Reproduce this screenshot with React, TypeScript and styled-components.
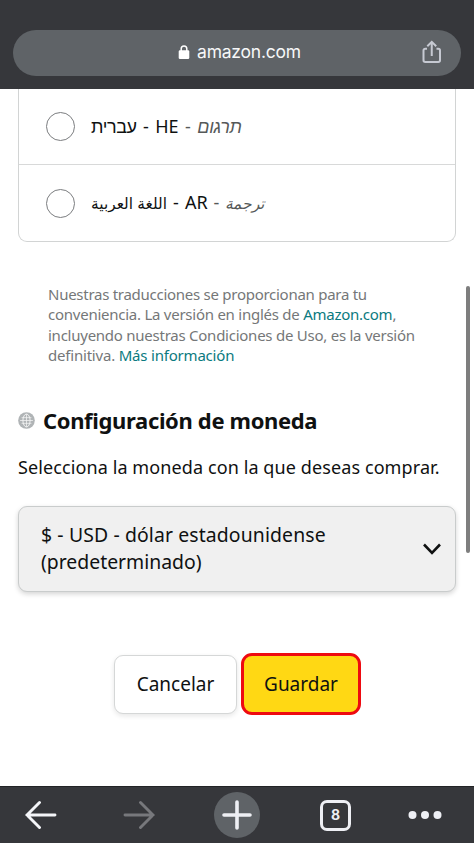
import React from 'react';
import styled, { createGlobalStyle } from 'styled-components';

const GlobalStyle = createGlobalStyle`
  * { box-sizing: border-box; }
  body { margin: 0; background: #fff; }
`;

const Screen = styled.div`
  position: relative;
  display: flex;
  flex-direction: column;
  width: 474px;
  height: 843px;
  overflow: hidden;
  background: #fff;
  color: #0f1111;
  font-family: 'Noto Sans', 'Open Sans', sans-serif;
`;

const TopBar = styled.header`
  flex: none;
  height: 89px;
  padding: 30px 13px 0;
  background: #36373b;
`;

const AddressBar = styled.div`
  display: grid;
  grid-template-columns: 60px 1fr 60px;
  align-items: center;
  height: 46px;
  border-radius: 23px;
  background: #5f6367;
`;

const Address = styled.div`
  grid-column: 2;
  display: flex;
  align-items: center;
  justify-content: center;
  gap: 7px;
  padding: 0 0 2px 5px;
  color: #f6f7f8;
  font: 400 17.5px/24px Inter, sans-serif;
  letter-spacing: -0.22px;
`;

const ShareSlot = styled.div`
  display: flex;
  justify-content: center;
  padding: 0 0 3px 1px;
`;

const Content = styled.main`
  flex: 1;
  padding: 0 18px;
`;

const LanguageCard = styled.section`
  height: 153px;
  border: 1px solid #d2d4d4;
  border-top: 0;
  border-radius: 0 0 9px 9px;
`;

const LanguageRow = styled.label<{ $divided?: boolean }>`
  display: flex;
  align-items: center;
  height: ${(p) => (p.$divided ? 76 : 76)}px;
  padding: 0 0 ${(p) => (p.$divided ? 1 : 0)}px 27px;
  ${(p) => p.$divided && 'border-bottom: 1px solid #d8d9d9;'}
`;

const Radio = styled.span`
  width: 29px;
  height: 29px;
  margin-right: 16px;
  border: 1px solid #7b7d7f;
  border-radius: 50%;
`;

const LanguageLabel = styled.span<{ $gap: number }>`
  display: flex;
  align-items: baseline;
  gap: ${(p) => p.$gap}px;
  font-size: 18px;
  line-height: 26px;
  white-space: nowrap;
`;

const Native = styled.bdi<{ $size: number; $spacing?: number }>`
  font-family: 'Liberation Sans', 'DejaVu Sans', sans-serif;
  font-size: ${(p) => p.$size}px;
  letter-spacing: ${(p) => p.$spacing ?? 0}px;
`;

const Translation = styled(Native)`
  color: #565959;
  font-style: italic;
`;

const Muted = styled.span`
  color: #565959;
`;

const Notice = styled.p`
  margin: 42px 0 0;
  padding-left: 30px;
  color: #757778;
  font-size: 15px;
  line-height: 20.3px;
`;

const Line = styled.span<{ $spacing: number }>`
  display: block;
  white-space: nowrap;
  letter-spacing: ${(p) => p.$spacing}px;
`;

const Link = styled.a`
  color: #0b7a80;
`;

const SectionHeading = styled.h2`
  display: flex;
  align-items: center;
  gap: 8px;
  margin: 39px 0 0;
  font-size: 22px;
  line-height: 32px;
  font-weight: 700;
`;

const Intro = styled.p`
  margin: 18px 0 0;
  font-size: 18px;
  line-height: 26px;
`;

const CurrencySelect = styled.button`
  display: flex;
  align-items: center;
  justify-content: space-between;
  width: 438px;
  height: 86px;
  margin-top: 25.5px;
  padding: 0 14px 0 22px;
  border: 1px solid #c9cccc;
  border-radius: 9px;
  background: #f0f0f0;
  box-shadow: 0 2px 5px rgba(15, 17, 17, 0.18);
  color: #0f1111;
  font: 400 19.4px/26.5px 'Noto Sans', sans-serif;
  text-align: left;
`;

const Actions = styled.div`
  display: flex;
  align-items: center;
  gap: 4px;
  margin: 61.5px 0 0 96px;
`;

const ActionButton = styled.button<{ $primary?: boolean }>`
  width: ${(p) => (p.$primary ? 120 : 123)}px;
  height: ${(p) => (p.$primary ? 62 : 59)}px;
  padding: 0;
  border: ${(p) => (p.$primary ? '3px solid #ee0a10' : '1px solid #d5d7d7')};
  border-radius: ${(p) => (p.$primary ? 11 : 9)}px;
  background: ${(p) => (p.$primary ? '#ffd814' : '#fff')};
  box-shadow: ${(p) => (p.$primary ? 'none' : '0 2px 5px rgba(15, 17, 17, 0.1)')};
  color: #0f1111;
  font: 400 19px/26px 'Noto Sans', sans-serif;
`;

const ScrollThumb = styled.div`
  position: absolute;
  top: 286px;
  right: 4px;
  width: 4px;
  height: 267px;
  border-radius: 2px;
  background: #7e7e7e;
`;

const BottomBar = styled.nav`
  flex: none;
  display: grid;
  grid-template-columns: 82px 114px 82px 115px 64px;
  align-items: center;
  justify-items: center;
  height: 57px;
  border-top: 1px solid #222326;
  background: #36373b;
`;

const NewTab = styled.span`
  display: grid;
  place-items: center;
  width: 46px;
  height: 46px;
  border-radius: 50%;
  background: #5f6367;
`;

const TabCount = styled.span`
  display: grid;
  place-items: center;
  width: 31px;
  height: 31px;
  border: 3px solid #eeeff4;
  border-radius: 7px;
  color: #eeeff4;
  font: 700 14px/14px Inter, sans-serif;
`;

const LockIcon = () => (
  <svg width="12" height="16" viewBox="0 0 12 16" fill="none">
    <rect x="0.7" y="6.2" width="10.6" height="8.8" rx="1.3" fill="#fff" />
    <path d="M3.2 7V4.700a2.8 2.8 0 0 1 5.6 0V7" stroke="#fff" strokeWidth="1.5" />
  </svg>
);

const ShareIcon = () => (
  <svg width="20" height="24" viewBox="0 0 20 24" fill="none" stroke="#c6c9d2" strokeWidth="2">
    <path d="M5 8.7H3.2A1.7 1.7 0 0 0 1.5 10.4V20.3A1.7 1.7 0 0 0 3.2 22H16.3A1.7 1.7 0 0 0 18 20.3V10.4A1.7 1.7 0 0 0 16.3 8.7H14.5" />
    <path d="M9.75 16V2M5.3 6.3L9.75 1.9L14.2 6.3" />
  </svg>
);

const GlobeIcon = () => (
  <svg width="17" height="17" viewBox="0 0 18 18" fill="none">
    <circle cx="9" cy="9" r="8.8" fill="#b0b4b6" />
    <g stroke="#fff" strokeWidth="1" opacity="0.85">
      <ellipse cx="9" cy="9" rx="3.8" ry="6.8" />
      <path d="M9 2.200V15.800M2.200 9H15.800M3.800 6H14.200M3.800 12H14.200" opacity="0.8" />
    </g>
  </svg>
);

const ChevronIcon = () => (
  <svg width="18" height="12" viewBox="0 0 18 12" fill="none" stroke="#0f1111" strokeWidth="2.6">
    <path d="M1 1.5L9 9.8L17 1.5" />
  </svg>
);

const ArrowIcon = ({ forward = false }: { forward?: boolean }) => (
  <svg width="32" height="30" viewBox="0 0 32 30" fill="none" strokeWidth="2.9" strokeLinecap="round" stroke={forward ? '#77787c' : '#f4f5f8'}>
    <path d={forward ? 'M2 15H30M17.5 2.5L30 15L17.5 27.5' : 'M30 15H2M14.5 2.5L2 15L14.5 27.5'} />
  </svg>
);

const PlusIcon = () => (
  <svg width="30" height="30" viewBox="0 0 30 30" stroke="#eeeff4" strokeWidth="3.6" strokeLinecap="round">
    <path d="M15 2V28M2 15H28" />
  </svg>
);

const MoreIcon = () => (
  <svg width="34" height="10" viewBox="0 0 34 10" fill="#eeeff4">
    <circle cx="4.5" cy="5" r="4" />
    <circle cx="17" cy="5" r="4" />
    <circle cx="29.5" cy="5" r="4" />
  </svg>
);

export default function App() {
  return (
    <Screen>
      <GlobalStyle />
      <TopBar>
        <AddressBar>
          <Address>
            <LockIcon />
            amazon.com
          </Address>
          <ShareSlot>
            <ShareIcon />
          </ShareSlot>
        </AddressBar>
      </TopBar>
      <Content>
        <LanguageCard>
          <LanguageRow $divided>
            <Radio />
            <LanguageLabel $gap={6.4}>
              <Native $size={18} $spacing={-0.4}>עברית</Native>
              <span>-</span>
              <span>HE</span>
              <Muted>-</Muted>
              <Translation $size={18} $spacing={-0.2}>תרגום</Translation>
            </LanguageLabel>
          </LanguageRow>
          <LanguageRow>
            <Radio />
            <LanguageLabel $gap={6}>
              <Native $size={15.4}>اللغة العربية</Native>
              <span>-</span>
              <span>AR</span>
              <Muted>-</Muted>
              <Translation $size={15.4}>ترجمة</Translation>
            </LanguageLabel>
          </LanguageRow>
        </LanguageCard>
        <Notice>
          <Line $spacing={-0.27}>Nuestras traducciones se proporcionan para tu</Line>
          <Line $spacing={-0.25}>
            conveniencia. La versión en inglés de <Link>Amazon.com</Link>,
          </Line>
          <Line $spacing={-0.25}>incluyendo nuestras Condiciones de Uso, es la versión</Line>
          <Line $spacing={-0.2}>
            definitiva. <Link>Más información</Link>
          </Line>
        </Notice>
        <SectionHeading>
          <GlobeIcon />
          <Line $spacing={-0.35}>Configuración de moneda</Line>
        </SectionHeading>
        <Intro>
          <Line $spacing={0.1}>Selecciona la moneda con la que deseas comprar.</Line>
        </Intro>
        <CurrencySelect>
          <span>
            <Line $spacing={0.12}>$ - USD - dólar estadounidense</Line>
            <Line $spacing={0}>(predeterminado)</Line>
          </span>
          <ChevronIcon />
        </CurrencySelect>
        <Actions>
          <ActionButton>Cancelar</ActionButton>
          <ActionButton $primary>Guardar</ActionButton>
        </Actions>
      </Content>
      <ScrollThumb />
      <BottomBar>
        <ArrowIcon />
        <ArrowIcon forward />
        <NewTab>
          <PlusIcon />
        </NewTab>
        <TabCount>8</TabCount>
        <MoreIcon />
      </BottomBar>
    </Screen>
  );
}
